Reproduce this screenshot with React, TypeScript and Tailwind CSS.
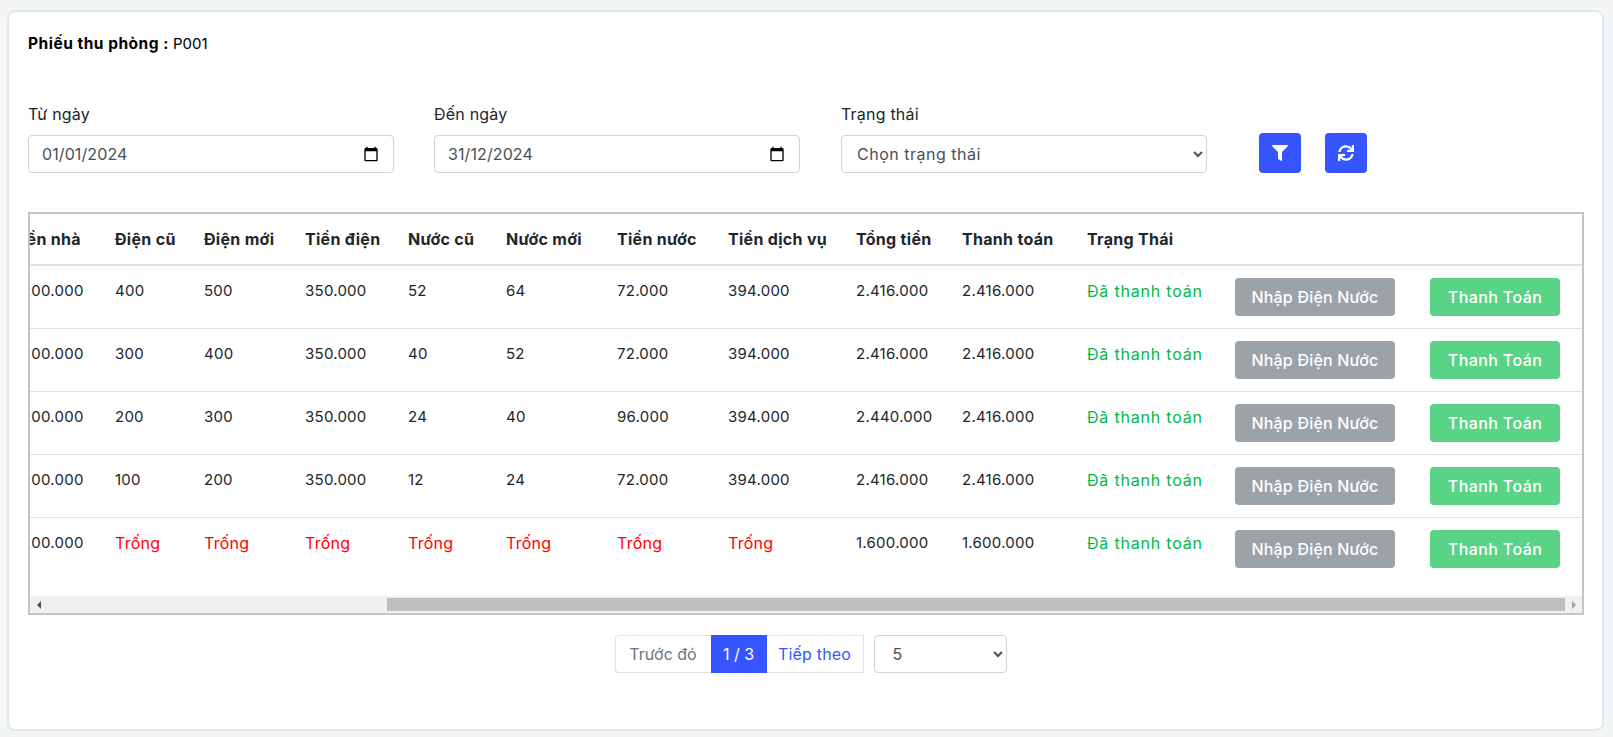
import React from "react";
import { FaFilter, FaSync } from "react-icons/fa";

const font = "font-['Inter','Noto_Sans',sans-serif]";

const headers = [
  "Tiền nhà",
  "Điện cũ",
  "Điện mới",
  "Tiền điện",
  "Nước cũ",
  "Nước mới",
  "Tiền nước",
  "Tiền dịch vụ",
  "Tổng tiền",
  "Thanh toán",
  "Trạng Thái",
  "",
  "",
];

const colWidths = [
  "w-[104px]",
  "w-[89px]",
  "w-[101px]",
  "w-[103px]",
  "w-[98px]",
  "w-[111px]",
  "w-[111px]",
  "w-[128px]",
  "w-[106px]",
  "w-[125px]",
  "w-[148px]",
  "w-[195px]",
  "w-[164px]",
];

const rows = [
  ["1.200.000", "400", "500", "350.000", "52", "64", "72.000", "394.000", "2.416.000", "2.416.000"],
  ["1.200.000", "300", "400", "350.000", "40", "52", "72.000", "394.000", "2.416.000", "2.416.000"],
  ["1.200.000", "200", "300", "350.000", "24", "40", "96.000", "394.000", "2.440.000", "2.416.000"],
  ["1.200.000", "100", "200", "350.000", "12", "24", "72.000", "394.000", "2.416.000", "2.416.000"],
  ["1.200.000", "Trống", "Trống", "Trống", "Trống", "Trống", "Trống", "Trống", "1.600.000", "1.600.000"],
];

const CalendarIcon = () => (
  <svg viewBox="0 0 24 24" className="w-[16px] h-[16px] fill-black">
    <path d="M20 3h-1V1h-2v2H7V1H5v2H4c-1.1 0-2 .9-2 2v16c0 1.100.9 2 2 2h16c1.100 0 2-.9 2-2V5c0-1.100-.9-2-2-2zm0 18H4V8h16v13z" />
  </svg>
);

const DateField = ({ label, value }: { label: string; value: string }) => (
  <div className="w-[366px]">
    <p className="text-[16px] tracking-[0.2px] leading-[22px] text-[#212529] mb-[10px]">{label}</p>
    <div className="h-[38px] border border-[#ced4da] rounded flex items-center justify-between pl-[13px] pr-[14px]">
      <span className="text-[16px] tracking-[0.1px] text-[#495057]">{value}</span>
      <CalendarIcon />
    </div>
  </div>
);

const App = () => {
  return (
    <div className={`h-[737px] overflow-hidden bg-[#f3f5f6] pt-[10px] pl-[7px] ${font}`}>
      <div className="w-[1597px] h-[721px] bg-white border-2 border-[#e0e9ed] rounded-[8px] pl-[19px] pt-[21px]">
        <p className="text-[15px] leading-[22px] text-black">
          <span className="font-bold text-[15.5px] tracking-[0.5px]">Phiếu thu phòng : </span>P001
        </p>

        <div className="flex items-start mt-[48px]">
          <DateField label="Từ ngày" value="01/01/2024" />
          <div className="ml-[40px]">
            <DateField label="Đến ngày" value="31/12/2024" />
          </div>
          <div className="ml-[41px] w-[366px]">
            <p className="text-[16px] tracking-[0.2px] leading-[22px] text-[#212529] mb-[10px]">Trạng thái</p>
            <select className="w-full h-[38px] bg-white border border-[#ced4da] rounded pl-[11px] text-[16px] tracking-[0.5px] text-[#495057]">
              <option>Chọn trạng thái</option>
            </select>
          </div>
          <div className="flex gap-[24px] ml-[52px] mt-[30px]">
            <button className="w-[42px] h-[40px] bg-[#3755ff] rounded flex items-center justify-center text-white text-[16px]">
              <FaFilter />
            </button>
            <button className="w-[42px] h-[40px] bg-[#3755ff] rounded flex items-center justify-center text-white text-[16px]">
              <FaSync />
            </button>
          </div>
        </div>

        <div className="w-[1556px] h-[403px] mt-[39px] border-2 border-[#c4c4c4] flex flex-col justify-between overflow-hidden">
          <table className="table-fixed w-[1583px] -ml-[31px] border-collapse text-[15px] tracking-[0.25px] text-[#212529]">
            <thead>
              <tr className="h-[51px] border-b-2 border-[#dee2e6]">
                {headers.map((h, i) => (
                  <th key={i} className={`${colWidths[i]} px-3 text-left font-bold text-[16px] tracking-[0.3px] whitespace-nowrap`}>
                    {h}
                  </th>
                ))}
              </tr>
            </thead>
            <tbody>
              {rows.map((row, r) => (
                <tr key={r} className={`h-[63px] ${r < rows.length - 1 ? "border-b border-[#dee2e6]" : ""}`}>
                  {row.map((cell, c) => (
                    <td
                      key={c}
                      className={`px-3 pt-[12px] align-top leading-[26px] ${cell === "Trống" ? "text-[#ff0000] text-[16px]" : ""}`}
                    >
                      {cell}
                    </td>
                  ))}
                  <td className="px-3 pt-[12px] align-top leading-[26px] text-[#00b84a] text-[16px] tracking-[0.8px] whitespace-nowrap">
                    Đã thanh toán
                  </td>
                  <td className="px-3 pt-[12px] align-top">
                    <button className="w-[160px] h-[38px] rounded bg-[#9ca3a8] text-white text-[16px] tracking-[0.2px] font-medium">
                      Nhập Điện Nước
                    </button>
                  </td>
                  <td className="px-3 pt-[12px] align-top">
                    <button className="w-[130px] h-[38px] rounded bg-[#5ad386] text-white text-[16px] tracking-[0.4px] font-medium">
                      Thanh Toán
                    </button>
                  </td>
                </tr>
              ))}
            </tbody>
          </table>

          <div className="h-[17px] bg-[#f0f0f0] flex items-center shrink-0">
            <div className="w-[17px] flex justify-center">
              <div className="border-y-[4px] border-y-transparent border-r-[4px] border-r-[#505050]" />
            </div>
            <div className="flex-1 h-[13px] pl-[340px]">
              <div className="h-full bg-[#bfbfbf]" />
            </div>
            <div className="w-[17px] flex justify-center">
              <div className="border-y-[4px] border-y-transparent border-l-[4px] border-l-[#a3a3a3]" />
            </div>
          </div>
        </div>

        <div className="flex justify-center items-center mt-[20px] w-[1556px] pl-[9px] text-[16px]">
          <div className="flex h-[38px]">
            <button className="w-[96px] border border-[#dee2e6] border-r-0 rounded-l text-[#6c757d]">Trước đó</button>
            <button className="w-[56px] bg-[#3755ff] text-white">1 / 3</button>
            <button className="w-[97px] border border-[#dee2e6] border-l-0 text-[#3755ff] tracking-[0.2px]">Tiếp theo</button>
          </div>
          <select className="ml-[10px] w-[133px] h-[38px] bg-white border border-[#ced4da] rounded pl-[14px] text-[#495057]">
            <option>5</option>
          </select>
        </div>
      </div>
    </div>
  );
};

export default App;
